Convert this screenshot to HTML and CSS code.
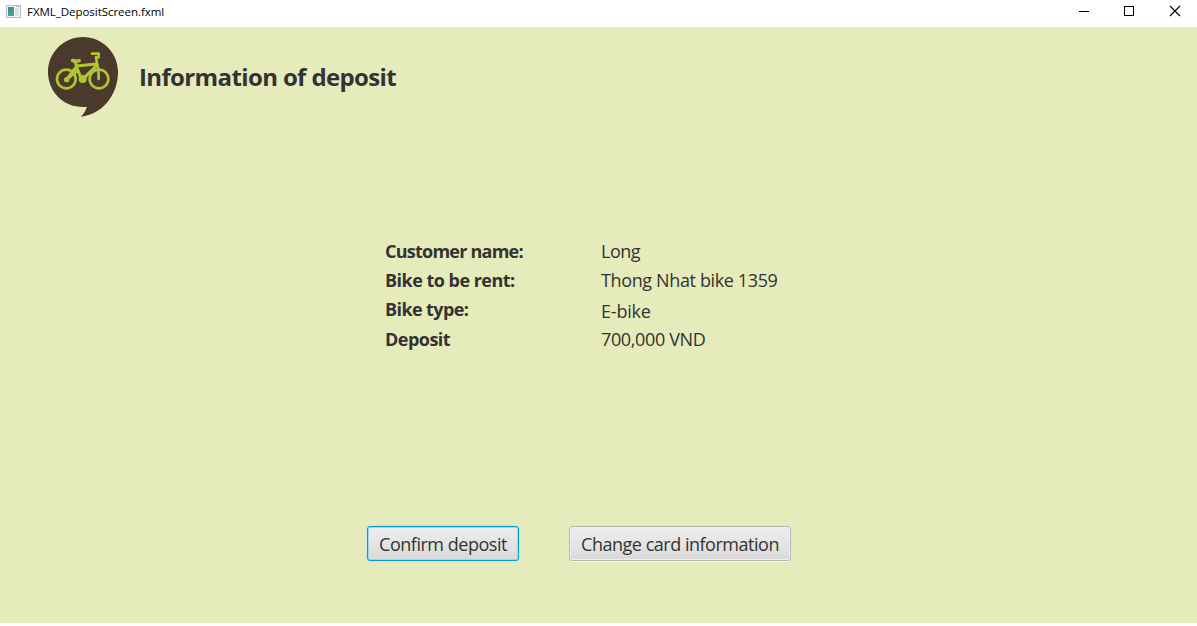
FILE: index.html
```html
<!DOCTYPE html>
<html lang="en">
<head>
<meta charset="utf-8">
<title>FXML_DepositScreen.fxml</title>
<link rel="stylesheet" href="styles.css">
</head>
<body>
<div class="window">
  <header class="titlebar">
    <svg class="app-icon" width="15" height="13" viewBox="0 0 15 13">
      <defs><linearGradient id="pane" x2="0.6" y2="1"><stop offset="0" stop-color="#3c7cae"/><stop offset="1" stop-color="#4ba87b"/></linearGradient></defs>
      <rect x=".5" y=".5" width="14" height="12" fill="#f4f4f4" stroke="#b9bdc0"/>
      <rect x="2" y="2" width="6" height="9" fill="url(#pane)"/>
      <rect x="9" y="3" width="4" height="8" fill="#dce3e6"/>
      <path d="M10 1.5h1M12 1.5h1" stroke="#8babc0"/>
    </svg>
    <span class="window-title">FXML_DepositScreen.fxml</span>
    <div class="controls">
      <svg width="46" height="27" viewBox="0 0 46 27" shape-rendering="crispEdges"><path d="M19 11.5h10" stroke="#000"/></svg>
      <svg width="46" height="27" viewBox="0 0 46 27" shape-rendering="crispEdges"><rect x="18.5" y="6.5" width="9" height="9" fill="none" stroke="#000"/></svg>
      <svg width="46" height="27" viewBox="0 0 46 27"><path d="M18 6l10 10M28 6L18 16" stroke="#000" stroke-width="1.1"/></svg>
    </div>
  </header>
  <main class="screen">
    <div class="heading">
      <svg class="logo" width="90" height="95" viewBox="0 0 270 285" fill="none">
        <path fill="#4b392b" d="M141 230C132 232 120 231 108 229C60 220 24 178 24 126C24 68 71 21 129 21S234 68 234 126C234 195 186 254 123 260Q136 247 141 230Z"/>
        <g stroke="#afc534" stroke-width="8" stroke-linecap="round" stroke-linejoin="round">
          <circle cx="79" cy="147" r="28"/>
          <circle cx="177" cy="147" r="28"/>
          <path d="M79 149L109 110L124 146M79 149L110 124M130 146L170 107M110 108L168 102M106 97L110 110" stroke-width="9"/>
          <path d="M156 71H176V82H168L173 110Q176 120 176 147" stroke-width="8"/>
          <path d="M98 92Q108 94 117 92" stroke-width="11"/>
        </g>
        <g fill="#afc534"><circle cx="80" cy="149" r="8"/><circle cx="128" cy="147" r="12"/></g>
      </svg>
      <h1 class="title">Information of deposit</h1>
    </div>
    <dl class="details">
      <dt class="l1">Customer name:</dt><dd class="v1">Long</dd>
      <dt class="l2">Bike to be rent:</dt><dd class="v2">Thong Nhat bike 1359</dd>
      <dt class="l3">Bike type:</dt><dd class="v3">E-bike</dd>
      <dt class="l4">Deposit</dt><dd class="v4">700,000 VND</dd>
    </dl>
    <div class="actions">
      <button class="btn confirm">Confirm deposit</button>
      <button class="btn change">Change card information</button>
    </div>
  </main>
</div>
</body>
</html>
```
FILE: styles.css
```css
* { box-sizing: border-box; }
body { margin: 0; background: #fff; font-family: "Open Sans", "Noto Sans", sans-serif; color: #333; }
.window { width: 1197px; height: 626px; overflow: hidden; }
.titlebar { height: 27px; display: flex; background: #fff; color: #000; }
.app-icon { margin: 5px 0 0 6px; flex: none; }
.window-title { margin-left: 6px; font-size: 11.5px; line-height: 24px; letter-spacing: -0.04px; white-space: nowrap; }
.controls { display: flex; margin-left: auto; width: 137px; }
.controls svg { flex: none; }
.screen { height: 596px; background: #e5ebbb; display: flex; flex-direction: column; }
.heading { display: flex; padding: 3px 0 0 40px; height: 212px; }
.logo { flex: none; }
.title { margin: 29px 0 0 9px; font-size: 24px; line-height: 36px; font-weight: 700; letter-spacing: -0.63px; white-space: nowrap; }
.details { margin: 0 0 0 385px; display: grid; grid-template-columns: 216px 300px; grid-template-rows: 29px 29px 30px 29px; height: 287px; align-content: start; font-size: 18px; line-height: 24px; white-space: nowrap; }
.details dt { font-weight: 700; letter-spacing: -0.52px; }
.details .l1 { letter-spacing: -0.76px; }
.details .l3 { letter-spacing: -0.6px; }
.details dd { margin: 0; letter-spacing: -0.37px; }
.details .v1 { letter-spacing: -0.5px; }
.details .v3 { padding-top: 2px; letter-spacing: -0.2px; }
.actions { display: flex; gap: 50px; padding-left: 367px; }
.btn { height: 35px; padding: 1px 0 0; border: 1px solid #b5b5b5; border-radius: 3px; background: linear-gradient(#efefef, #d9d9d9); box-shadow: inset 0 0 0 1px #f0f0f0, 0 1px 0 #f8faee; font: 18px/32px "Open Sans", sans-serif; letter-spacing: -0.48px; color: #333; white-space: nowrap; }
.confirm { width: 152px; border-color: #039ed3; box-shadow: inset 0 0 0 1px #a3d5e5, 0 0 0 1px #c4e6e4; }
.change { width: 222px; }
```
